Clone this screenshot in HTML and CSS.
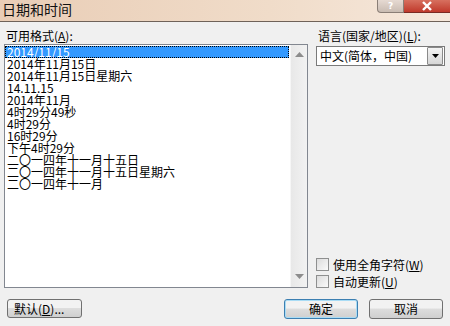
FILE: index.html
```html
<!DOCTYPE html>
<html lang="zh-CN">
<head>
    <meta charset="UTF-8">
    <title>日期和时间</title>
    <link rel="stylesheet" href="styles.css">
</head>
<body>
    <div class="titlebar">
        <span class="title">日期和时间</span>
        <div class="caption-btns">
            <span class="cap-help">?</span>
            <span class="cap-close">
                <svg width="12" height="10" viewBox="0 0 12 10"><path d="M2 1 L10 9 M10 1 L2 9" stroke="#fff" stroke-width="2.4"/></svg>
            </span>
        </div>
    </div>
    <div class="main">
        <div class="left">
            <div class="label">可用格式(<u>A</u>):</div>
            <div class="listbox">
                <ul class="items">
                    <li class="selected">2014/11/15</li>
                    <li>2014年11月15日</li>
                    <li>2014年11月15日星期六</li>
                    <li>14.11.15</li>
                    <li>2014年11月</li>
                    <li>4时29分49秒</li>
                    <li>4时29分</li>
                    <li>16时29分</li>
                    <li>下午4时29分</li>
                    <li>二〇一四年十一月十五日</li>
                    <li>二〇一四年十一月十五日星期六</li>
                    <li>二〇一四年十一月</li>
                </ul>
                <div class="scrollbar">
                    <svg width="9" height="5" viewBox="0 0 9 5"><path d="M0 5 L4.5 0 L9 5 Z" fill="#8c8c8c"/></svg>
                    <svg width="9" height="5" viewBox="0 0 9 5"><path d="M0 0 L4.5 5 L9 0 Z" fill="#8c8c8c"/></svg>
                </div>
            </div>
        </div>
        <div class="right">
            <div class="label">语言(国家/地区)(<u>L</u>):</div>
            <div class="combo">
                <span class="combo-text">中文(简体，中国)</span>
                <span class="combo-btn">
                    <svg width="7" height="4" viewBox="0 0 7 4"><path d="M0 0 L3.5 4 L7 0 Z" fill="#000"/></svg>
                </span>
            </div>
            <div class="checks">
                <label class="check"><span class="box"></span>使用全角字符(<u>W</u>)</label>
                <label class="check"><span class="box"></span>自动更新(<u>U</u>)</label>
            </div>
        </div>
    </div>
    <div class="footer">
        <button class="btn btn-wide">默认(<u>D</u>)...</button>
        <div class="footer-right">
            <button class="btn default">确定</button>
            <button class="btn">取消</button>
        </div>
    </div>
</body>
</html>
```

FILE: styles.css
```css
body {
    margin: 0;
    width: 450px;
    height: 326px;
    background-color: #f0f0f0;
    font-family: "Noto Sans CJK SC", sans-serif;
    font-size: 12px;
    color: #000;
    overflow: hidden;
}
u {
    text-decoration: underline;
}
.titlebar {
    height: 21px;
    border-bottom: 1px solid #6f6259;
    background: linear-gradient(to right, #e9cdb6, #f0dcc9 60%, #f6e8dc);
    display: flex;
    justify-content: space-between;
}
.title {
    font-size: 14px;
    line-height: 18px;
    padding-left: 2px;
    color: #111;
}
.caption-btns {
    display: flex;
    align-items: flex-start;
}
.cap-help {
    width: 25px;
    height: 12px;
    border: 1px solid #8a7e76;
    border-top: none;
    border-radius: 0 0 0 4px;
    background: linear-gradient(#e6dad2, #c9bcb2);
    color: #fff;
    font-family: "DejaVu Sans", sans-serif;
    font-size: 9px;
    line-height: 12px;
    text-align: center;
    font-weight: bold;
}
.cap-close {
    width: 46px;
    height: 12px;
    border-bottom: 1px solid #7a2a22;
    background: linear-gradient(#d7705f, #c0392b);
    display: flex;
    justify-content: center;
    align-items: center;
}
.main {
    display: grid;
    grid-template-columns: 304px 129px;
    column-gap: 8px;
    padding: 0 0 0 4px;
}
.label {
    height: 16px;
    margin-top: 6px;
    line-height: 16px;
    padding-left: 2px;
}
.listbox {
    height: 242px;
    border: 1px solid #828790;
    background-color: #fff;
    display: flex;
}
.items {
    flex: 1;
    list-style-type: none;
    margin: 0;
    padding: 1px 1px 0 0;
}
.items li {
    height: 12px;
    line-height: 12px;
    padding-left: 2px;
    white-space: nowrap;
}
.items .selected {
    background-color: #3399ff;
    color: #fff;
    outline: 1px dotted #000;
    outline-offset: -1px;
}
.scrollbar {
    width: 16px;
    background: linear-gradient(to right, #e8e8e8, #f2f2f2);
    border-left: 1px solid #f6f6f6;
    display: flex;
    flex-direction: column;
    justify-content: space-between;
    align-items: center;
    padding: 7px 0 8px;
}
.right {
    display: flex;
    flex-direction: column;
}
.combo {
    margin-top: 2px;
    height: 18px;
    border: 1px solid #7a7a7a;
    background-color: #fff;
    display: flex;
    align-items: center;
}
.combo-text {
    flex: 1;
    padding-left: 3px;
    line-height: 16px;
}
.combo-btn {
    width: 14px;
    height: 16px;
    margin-right: 1px;
    border: 1px solid #8a8a8a;
    border-radius: 1px;
    background: linear-gradient(#f4f4f4, #d6d6d6);
    display: flex;
    justify-content: center;
    align-items: center;
}
.checks {
    margin-top: auto;
    display: flex;
    flex-direction: column;
    gap: 4px;
}
.check {
    display: flex;
    align-items: center;
    height: 13px;
    line-height: 13px;
}
.box {
    width: 11px;
    height: 11px;
    margin-right: 4px;
    border: 1px solid #8e8f8f;
    background: linear-gradient(135deg, #dcdcdc, #fafafa);
}
.footer {
    display: flex;
    justify-content: space-between;
    padding: 11px 7px 0 7px;
}
.footer-right {
    display: flex;
    gap: 11px;
}
.btn {
    width: 74px;
    height: 20px;
    padding: 0;
    border: 1px solid #707070;
    border-radius: 3px;
    background: linear-gradient(#f2f2f2 45%, #dddddd 50%, #cfcfcf);
    font-family: "Noto Sans CJK SC", sans-serif;
    font-size: 12px;
    line-height: 16px;
    color: #000;
}
.btn-wide {
    width: 75px;
    height: 19px;
    text-align: left;
    padding-left: 6px;
}
.default {
    border-color: #3c7fb1;
    box-shadow: inset 0 0 0 1px #a9dcf5;
}
```
